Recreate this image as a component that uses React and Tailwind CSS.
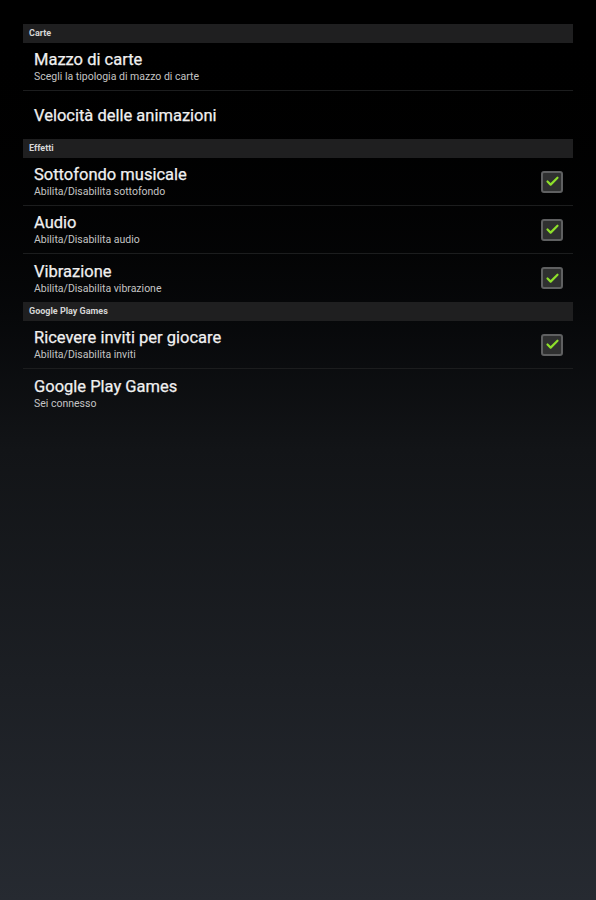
import { Check } from 'lucide-react';

const sections = [
  {
    title: 'Carte',
    items: [
      { title: 'Mazzo di carte', summary: 'Scegli la tipologia di mazzo di carte' },
      { title: 'Velocità delle animazioni' },
    ],
  },
  {
    title: 'Effetti',
    items: [
      { title: 'Sottofondo musicale', summary: 'Abilita/Disabilita sottofondo', checked: true },
      { title: 'Audio', summary: 'Abilita/Disabilita audio', checked: true },
      { title: 'Vibrazione', summary: 'Abilita/Disabilita vibrazione', checked: true },
    ],
  },
  {
    title: 'Google Play Games',
    items: [
      { title: 'Ricevere inviti per giocare', summary: 'Abilita/Disabilita inviti', checked: true },
      { title: 'Google Play Games', summary: 'Sei connesso' },
    ],
  },
];

function CheckBox() {
  return (
    <div className="flex h-[22px] w-[22px] items-center justify-center rounded-[3px] border-2 border-[#5f6061] bg-[#2f3030]">
      <Check size={15} strokeWidth={3.5} className="text-[#8ee02b]" />
    </div>
  );
}

function PrefRow({ item, last }) {
  return (
    <div className={`flex h-12 items-center pl-[11px] pr-[10px] ${last ? '' : 'border-b border-[#1c1d1e]'}`}>
      <div className="flex-1">
        <div className="text-[16.5px] leading-[19px] text-[#f0f0f0] [-webkit-text-stroke:0.25px_#f0f0f0]">{item.title}</div>
        {item.summary && <div className="mt-[2px] text-[10.5px] leading-[12px] text-[#c4c4c4]">{item.summary}</div>}
      </div>
      {item.checked && <CheckBox />}
    </div>
  );
}

export default function App() {
  return (
    <div className="min-h-[900px] bg-gradient-to-b from-[#000000] via-[#121417] to-[#262a31] pt-6 font-['Roboto',sans-serif]">
      <div className="mx-[23px] w-[550px]">
        {sections.map((section) => (
          <div key={section.title}>
            <div className="flex h-[19px] items-center bg-[#1f1f20] px-[6px] text-[9px] font-bold text-[#d6d6d6]">{section.title}</div>
            {section.items.map((item, i) => (
              <PrefRow key={item.title} item={item} last={i === section.items.length - 1} />
            ))}
          </div>
        ))}
      </div>
    </div>
  );
}
